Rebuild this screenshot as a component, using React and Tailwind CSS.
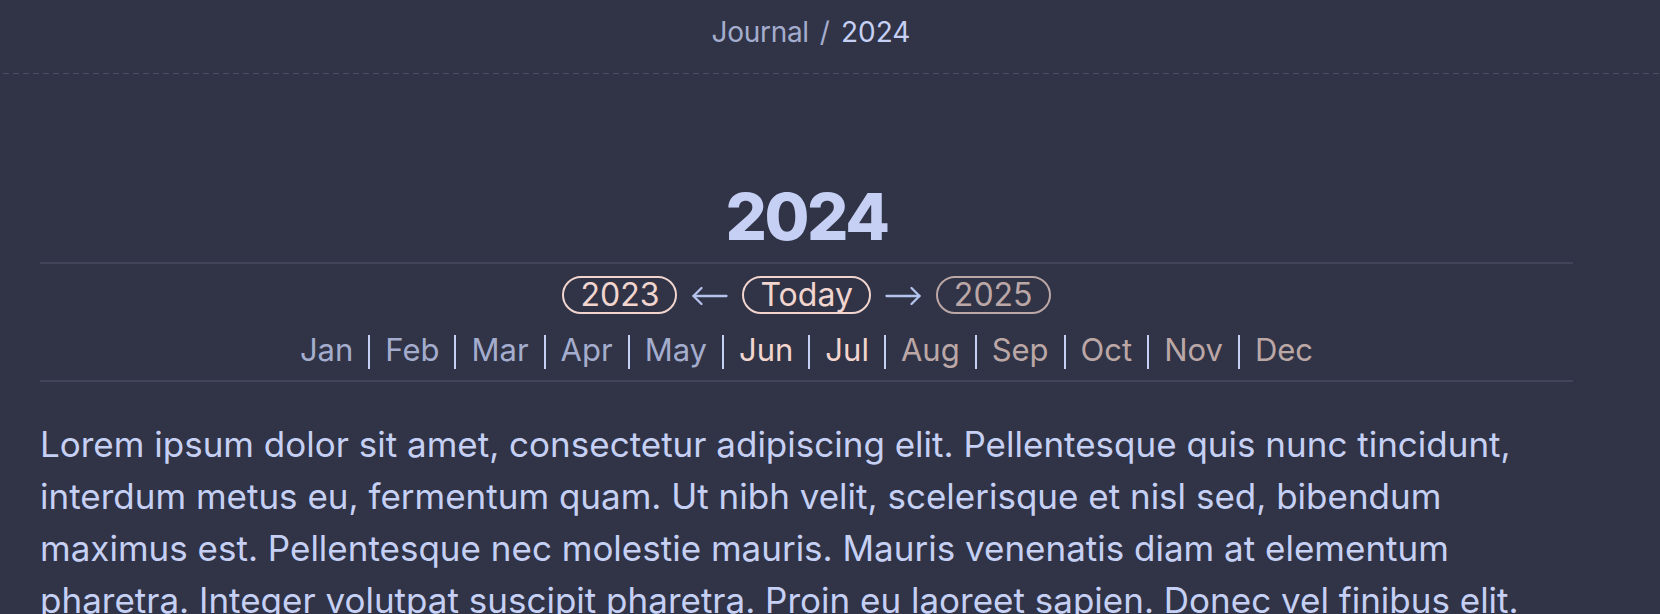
function ArrowLeft() {
  return (
    <svg width="37" height="20" viewBox="0 0 37 20" fill="none" stroke="#b5c3ef" strokeWidth="2.3" strokeLinecap="round" strokeLinejoin="round" className="translate-y-[1px]">
      <line x1="2.5" y1="10" x2="35.5" y2="10" />
      <polyline points="10.5,2 2.5,10 10.5,18" />
    </svg>
  );
}

function ArrowRight() {
  return (
    <svg width="37" height="20" viewBox="0 0 37 20" fill="none" stroke="#b5c3ef" strokeWidth="2.3" strokeLinecap="round" strokeLinejoin="round" className="translate-y-[1px]">
      <line x1="1.5" y1="10" x2="34.5" y2="10" />
      <polyline points="26.5,2 34.5,10 26.5,18" />
    </svg>
  );
}

export default function App() {
  const months = [
    ["Jan", "text-[#a5adce]"],
    ["Feb", "text-[#a5adce]"],
    ["Mar", "text-[#a5adce]"],
    ["Apr", "text-[#a5adce]"],
    ["May", "text-[#a5adce]"],
    ["Jun", "text-[#f2d5cf]"],
    ["Jul", "text-[#f2d5cf]"],
    ["Aug", "text-[#bca7a7]"],
    ["Sep", "text-[#bca7a7]"],
    ["Oct", "text-[#bca7a7]"],
    ["Nov", "text-[#bca7a7]"],
    ["Dec", "text-[#bca7a7]"],
  ];
  return (
    <div className="w-[1660px] h-[614px] overflow-hidden bg-[#303446] text-[#c6d0f5] font-['Inter',sans-serif]">
      <header className="h-[73px] pt-[12px] flex justify-center">
        <div className="flex text-[28px] leading-[40px] ml-[-38px]">
          <span className="text-[#a5adce] tracking-[-0.3px]">Journal</span>
          <span className="text-[#a5adce] mx-[11px]">/</span>
          <span className="text-[#c6d0f5]">2024</span>
        </div>
      </header>
      <div className="h-px bg-[repeating-linear-gradient(to_right,transparent_0_3px,#4a4f65_3px_9px,transparent_9px_10px)]" />
      <main className="pl-[40px] pr-[87px]">
        <h1 className="mt-[103px] text-center text-[65px] leading-[79px] font-extrabold tracking-[-2.4px]">2024</h1>
        <div className="mt-[6px] h-[2px] bg-[#414559]" />
        <div className="mt-[12px] flex justify-center items-center text-[32px] leading-[34px] gap-[14px]">
          <span className="rounded-full border-2 border-[#f2d5cf] text-[#f2d5cf] px-[16px]">2023</span>
          <ArrowLeft />
          <span className="rounded-full border-2 border-[#f2d5cf] text-[#f2d5cf] px-[16px]">Today</span>
          <ArrowRight />
          <span className="rounded-full border-2 border-[#bca7a7] text-[#bca7a7] px-[16px]">2025</span>
        </div>
        <div className="mt-[12px] flex justify-center items-center text-[31px] leading-[48px]">
          {months.map(([m, c], i) => (
            <span key={m} className="flex items-center">
              {i > 0 && <span className="inline-block w-[2px] h-[34px] bg-[#c6d0f5] mx-[15px] translate-y-[2px]" />}
              <span className={c}>{m}</span>
            </span>
          ))}
        </div>
        <div className="mt-[6px] h-[2px] bg-[#414559]" />
        <p className="mt-[36px] text-[35px] leading-[52px]">
          Lorem ipsum dolor sit amet, consectetur adipiscing elit. Pellentesque quis nunc tincidunt, interdum metus eu, fermentum quam. Ut nibh velit, scelerisque et nisl sed, bibendum maximus est. Pellentesque nec molestie mauris. Mauris venenatis diam at elementum pharetra. Integer volutpat suscipit pharetra. Proin eu laoreet sapien. Donec vel finibus elit. Nam posuere, lorem ac faucibus tincidunt, neque nisi mattis purus, vitae ultricies urna sem ac ipsum.
        </p>
      </main>
    </div>
  );
}
